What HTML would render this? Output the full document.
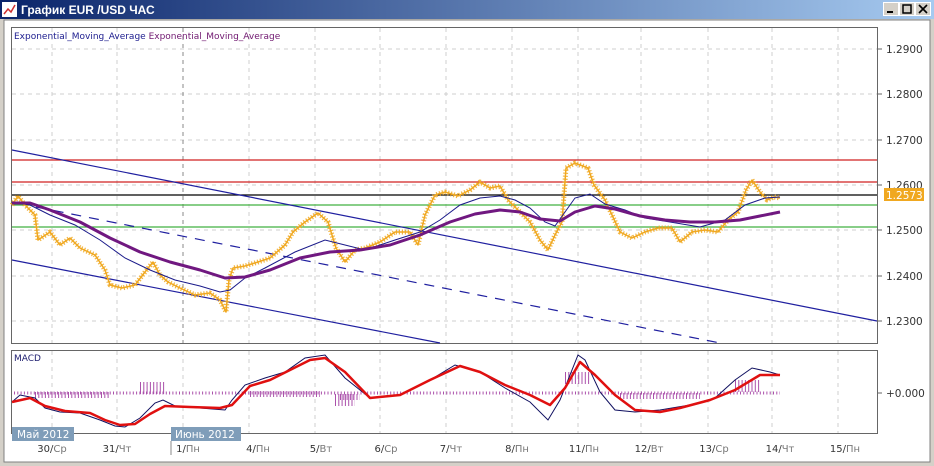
<!DOCTYPE html>
<html><head><meta charset="utf-8"><style>
body{margin:0;width:934px;height:466px;overflow:hidden;background:#d4d0c8;font-family:"Liberation Sans","DejaVu Sans",sans-serif}
.t{position:absolute;left:0;top:0;width:934px;height:19px;background:linear-gradient(90deg,#0a246a,#a6caf0)}
</style></head><body>
<div class="t"></div>
<svg style="position:absolute;left:0;top:0" width="934" height="466" font-family="DejaVu Sans, sans-serif">
<rect x="2" y="2" width="15" height="15" fill="#fff"/>
<polyline points="4,14 8,9 11,12 15,5" fill="none" stroke="#d03030" stroke-width="1.5"/>
<text x="21" y="14" font-size="12" font-weight="bold" fill="#fff" font-family="Liberation Sans, sans-serif">График EUR /USD  ЧАС</text>
<g fill="#d4d0c8" stroke="#fff"><rect x="883.5" y="2.5" width="15" height="13"/><rect x="899.5" y="2.5" width="15" height="13"/><rect x="915.5" y="2.5" width="15" height="13"/></g>
<rect x="887" y="11" width="6" height="2" fill="#000"/>
<rect x="903" y="5" width="8" height="8" fill="none" stroke="#000" stroke-width="1.5"/>
<path d="M919 5 L927 13 M927 5 L919 13" stroke="#000" stroke-width="1.6"/>
<rect x="4" y="20" width="926" height="442" fill="#fff" stroke="#808080"/>
<g stroke="#666" fill="none"><rect x="11.5" y="27.5" width="866" height="316"/><rect x="11.5" y="350.5" width="866" height="83"/></g>
<g stroke="#cfcfcf" stroke-dasharray="4,4">
<path d="M12 49H877M12 94H877M12 140H877M12 185H877M12 230H877M12 276H877M12 321H877"/>
<path d="M52 28V343M117 28V343M249 28V343M315 28V343M380 28V343M446 28V343M512 28V343M578 28V343M641 28V343M708 28V343M772 28V343M838 28V343"/>
<path d="M52 351V433M117 351V433M183 351V433M249 351V433M315 351V433M380 351V433M446 351V433M512 351V433M578 351V433M641 351V433M708 351V433M772 351V433M838 351V433"/>
</g>
<path d="M183 28V343" stroke="#888" stroke-dasharray="4,4"/>
<g stroke-width="1.2"><path d="M12 160H877M12 182H877" stroke="#d02020"/><path d="M12 195H877" stroke="#000"/><path d="M12 205H877M12 227H877" stroke="#40b040"/></g>
<g stroke="#2020a0" stroke-width="1.2" fill="none"><path d="M12 150L877 321"/><path d="M12 260L440 343"/><path d="M36 207L720 343" stroke-dasharray="10,8"/></g>
<g fill="none" stroke="#f0a820" stroke-linejoin="round">
<polyline stroke-width="5" stroke-dasharray="1.2,1.8" opacity="0.85" points="12,205 18,196 25,205 35,215 38,240 50,232 60,245 70,238 80,248 95,255 105,270 110,285 122,288 135,285 145,272 153,262 160,275 168,282 180,288 195,295 210,293 220,300 226,312 229,280 233,268 245,266 258,262 270,258 285,245 293,232 305,222 318,213 328,222 336,248 345,262 355,250 365,248 380,242 395,232 410,232 418,245 425,215 435,195 445,192 458,196 470,190 480,182 490,188 500,186 508,200 518,210 530,222 540,240 548,250 555,235 562,222 566,168 575,163 588,168 594,185 605,200 612,215 620,232 632,238 645,232 658,228 672,228 680,242 692,232 705,230 718,232 728,220 738,212 746,190 752,180 760,192 767,200 774,197 780,198"/>
<polyline stroke-width="1.5" points="12,205 18,196 25,205 35,215 38,240 50,232 60,245 70,238 80,248 95,255 105,270 110,285 122,288 135,285 145,272 153,262 160,275 168,282 180,288 195,295 210,293 220,300 226,312 229,280 233,268 245,266 258,262 270,258 285,245 293,232 305,222 318,213 328,222 336,248 345,262 355,250 365,248 380,242 395,232 410,232 418,245 425,215 435,195 445,192 458,196 470,190 480,182 490,188 500,186 508,200 518,210 530,222 540,240 548,250 555,235 562,222 566,168 575,163 588,168 594,185 605,200 612,215 620,232 632,238 645,232 658,228 672,228 680,242 692,232 705,230 718,232 728,220 738,212 746,190 752,180 760,192 767,200 774,197 780,198"/>
</g>
<polyline fill="none" stroke="#1a1a8a" stroke-width="1" points="12,202 30,205 50,215 75,225 100,240 125,258 150,270 175,280 200,286 220,292 230,290 245,278 265,268 295,252 325,240 345,245 365,250 395,240 420,232 440,220 460,205 480,198 500,196 515,200 530,208 545,222 555,226 565,212 575,198 590,194 605,204 625,210 645,218 670,222 700,227 725,220 745,205 765,198 780,197"/>
<polyline fill="none" stroke="#701880" stroke-width="3" stroke-linejoin="round" points="12,203 30,203 50,210 80,222 110,238 140,252 170,262 200,270 225,278 245,277 270,270 300,258 330,252 360,250 390,245 420,235 450,222 475,214 500,210 520,212 540,219 560,221 575,212 595,206 615,209 640,216 665,220 690,222 715,222 740,220 760,216 780,212"/>
<text x="14" y="39" font-size="9" fill="#202090">Exponential_Moving_Average <tspan fill="#701870">Exponential_Moving_Average</tspan></text>
<g font-size="10.5" fill="#333"><text x="886" y="53">1.2900</text><text x="886" y="98">1.2800</text><text x="886" y="144">1.2700</text><text x="886" y="189">1.2600</text><text x="886" y="234">1.2500</text><text x="886" y="280">1.2400</text><text x="886" y="325">1.2300</text><text x="886" y="397">+0.000</text></g>
<g stroke="#666"><path d="M877 49h5M877 94h5M877 140h5M877 185h5M877 230h5M877 276h5M877 321h5M877 393h5"/></g>
<rect x="884" y="188" width="40" height="13" fill="#f0a820"/>
<text x="886" y="199" font-size="10.5" fill="#fff">1.2573</text>
<text x="14" y="361" font-size="9" fill="#202070">MACD</text>
<g stroke="#901890" stroke-dasharray="1,2.3" opacity="0.75">
<path d="M14 393H780" stroke-width="3"/>
<path d="M35 395H110M250 394H320M340 397H360M620 396H700" stroke-width="6"/>
<path d="M140 388H165M335 400H355M565 378H590M735 386H760" stroke-width="12"/>
</g>
<polyline fill="none" stroke="#101060" stroke-width="1" points="12,402 20,395 35,398 45,408 60,412 80,413 100,420 115,426 125,427 140,418 155,403 163,400 175,406 200,408 225,410 232,400 245,385 265,378 285,372 305,358 325,355 345,378 370,398 400,395 430,380 455,365 480,372 505,388 530,402 548,420 560,400 578,355 585,360 600,392 615,410 635,412 660,410 690,405 715,398 735,380 752,368 770,372 780,375"/>
<polyline fill="none" stroke="#e01010" stroke-width="2.5" stroke-linejoin="round" points="12,402 30,398 45,406 65,411 90,413 105,420 120,425 135,424 150,414 165,406 190,407 220,408 232,405 250,386 270,380 290,370 310,360 325,358 345,372 370,398 400,395 430,380 460,366 480,372 505,385 530,395 550,405 565,388 580,362 595,375 615,395 635,410 660,412 680,408 710,400 735,390 760,375 780,375"/>
<rect x="12" y="427" width="62" height="14" fill="#7f9db9"/><text x="17" y="438" font-size="10.5" fill="#fff">Май 2012</text>
<rect x="171" y="427" width="70" height="14" fill="#7f9db9"/><text x="175" y="438" font-size="10.5" fill="#fff">Июнь 2012</text>
<path d="M171 441V455" stroke="#888"/>
<g font-size="10" fill="#333" text-anchor="middle"><text x="52" y="452">30/<tspan fill="#777">Ср</tspan></text><text x="117" y="452">31/<tspan fill="#777">Чт</tspan></text><text x="188" y="452">1/<tspan fill="#777">Пн</tspan></text><text x="258" y="452">4/<tspan fill="#777">Пн</tspan></text><text x="321" y="452">5/<tspan fill="#777">Вт</tspan></text><text x="386" y="452">6/<tspan fill="#777">Ср</tspan></text><text x="451" y="452">7/<tspan fill="#777">Чт</tspan></text><text x="517" y="452">8/<tspan fill="#777">Пн</tspan></text><text x="584" y="452">11/<tspan fill="#777">Пн</tspan></text><text x="649" y="452">12/<tspan fill="#777">Вт</tspan></text><text x="714" y="452">13/<tspan fill="#777">Ср</tspan></text><text x="780" y="452">14/<tspan fill="#777">Чт</tspan></text><text x="845" y="452">15/<tspan fill="#777">Пн</tspan></text></g>
</svg>
</body></html>
